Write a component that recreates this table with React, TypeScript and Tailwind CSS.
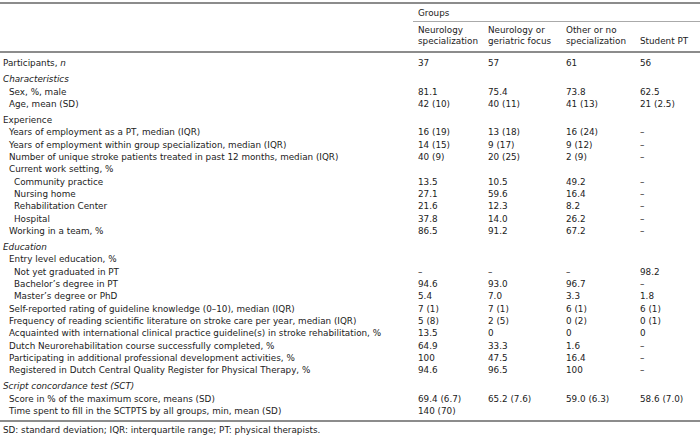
import type React from "react";

type Row = {
  label: React.ReactNode;
  values?: string[];
  indent?: 0 | 1 | 2;
  section?: boolean;
  italic?: boolean;
};

const rows: Row[] = [
  { label: <>Participants, <i>n</i></>, values: ["37", "57", "61", "56"] },
  { label: "Characteristics", section: true, italic: true },
  { label: "Sex, %, male", indent: 1, values: ["81.1", "75.4", "73.8", "62.5"] },
  { label: "Age, mean (SD)", indent: 1, values: ["42 (10)", "40 (11)", "41 (13)", "21 (2.5)"] },
  { label: "Experience", section: true },
  { label: "Years of employment as a PT, median (IQR)", indent: 1, values: ["16 (19)", "13 (18)", "16 (24)", "–"] },
  { label: "Years of employment within group specialization, median (IQR)", indent: 1, values: ["14 (15)", "9 (17)", "9 (12)", "–"] },
  { label: "Number of unique stroke patients treated in past 12 months, median (IQR)", indent: 1, values: ["40 (9)", "20 (25)", "2 (9)", "–"] },
  { label: "Current work setting, %", indent: 1 },
  { label: "Community practice", indent: 2, values: ["13.5", "10.5", "49.2", "–"] },
  { label: "Nursing home", indent: 2, values: ["27.1", "59.6", "16.4", "–"] },
  { label: "Rehabilitation Center", indent: 2, values: ["21.6", "12.3", "8.2", "–"] },
  { label: "Hospital", indent: 2, values: ["37.8", "14.0", "26.2", "–"] },
  { label: "Working in a team, %", indent: 1, values: ["86.5", "91.2", "67.2", "–"] },
  { label: "Education", section: true, italic: true },
  { label: "Entry level education, %", indent: 1 },
  { label: "Not yet graduated in PT", indent: 2, values: ["–", "–", "–", "98.2"] },
  { label: "Bachelor’s degree in PT", indent: 2, values: ["94.6", "93.0", "96.7", "–"] },
  { label: "Master’s degree or PhD", indent: 2, values: ["5.4", "7.0", "3.3", "1.8"] },
  { label: "Self-reported rating of guideline knowledge (0–10), median (IQR)", indent: 1, values: ["7 (1)", "7 (1)", "6 (1)", "6 (1)"] },
  { label: "Frequency of reading scientific literature on stroke care per year, median (IQR)", indent: 1, values: ["5 (8)", "2 (5)", "0 (2)", "0 (1)"] },
  { label: "Acquainted with international clinical practice guideline(s) in stroke rehabilitation, %", indent: 1, values: ["13.5", "0", "0", "0"] },
  { label: "Dutch Neurorehabilitation course successfully completed, %", indent: 1, values: ["64.9", "33.3", "1.6", "–"] },
  { label: "Participating in additional professional development activities, %", indent: 1, values: ["100", "47.5", "16.4", "–"] },
  { label: "Registered in Dutch Central Quality Register for Physical Therapy, %", indent: 1, values: ["94.6", "96.5", "100", "–"] },
  { label: "Script concordance test (SCT)", section: true, italic: true },
  { label: "Score in % of the maximum score, means (SD)", indent: 1, values: ["69.4 (6.7)", "65.2 (7.6)", "59.0 (6.3)", "58.6 (7.0)"] },
  { label: "Time spent to fill in the SCTPTS by all groups, min, mean (SD)", indent: 1, values: ["140 (70)"] },
];

const head = "px-[5px] pt-[3px] pb-[4px] text-left align-bottom font-normal leading-[11px]";

export default function App() {
  return (
    <div
      className="h-[440px] w-[700px] overflow-hidden bg-white pt-[2px] text-[8.8px] leading-[12.3px] text-[#222]"
      style={{ fontFamily: '"DejaVu Sans", Verdana, sans-serif' }}
    >
      <table className="w-full table-fixed border-collapse">
        <colgroup>
          <col className="w-[413px]" />
          <col className="w-[70px]" />
          <col className="w-[78px]" />
          <col className="w-[74px]" />
          <col />
        </colgroup>
        <thead>
          <tr className="border-t-2 border-[#8c8c8c]">
            <th />
            <th colSpan={4} className="border-b border-[#aaa] px-[5px] pt-[3px] pb-[2px] text-left font-normal leading-[12px]">
              Groups
            </th>
          </tr>
          <tr className="border-b-2 border-[#8c8c8c]">
            <th />
            <th className={head}>Neurology specialization</th>
            <th className={head}>Neurology or geriatric focus</th>
            <th className={head}>Other or no specialization</th>
            <th className={head + " whitespace-nowrap"}>Student PT</th>
          </tr>
        </thead>
        <tbody className="border-b-2 border-[#8c8c8c]">
          {rows.map((r, i) => (
            <tr key={i}>
              <td
                className={
                  "whitespace-nowrap " +
                  (r.indent === 2 ? "pl-[14px] " : r.indent === 1 ? "pl-[9px] " : "pl-[3px] ") +
                  (r.section ? "pt-[4px] " : i === 0 ? "pt-[4px] " : "") +
                  (r.italic ? "italic " : "") +
                  (i === rows.length - 1 ? "pb-[3px]" : "")
                }
              >
                {r.label}
              </td>
              {[0, 1, 2, 3].map((c) => (
                <td
                  key={c}
                  className={"whitespace-nowrap pl-[5px] align-bottom " + (i === rows.length - 1 ? "pb-[3px]" : "")}
                >
                  {r.values?.[c] ?? ""}
                </td>
              ))}
            </tr>
          ))}
        </tbody>
      </table>
      <p className="pl-[3px] pt-[2px]">SD: standard deviation; IQR: interquartile range; PT: physical therapists.</p>
    </div>
  );
}
